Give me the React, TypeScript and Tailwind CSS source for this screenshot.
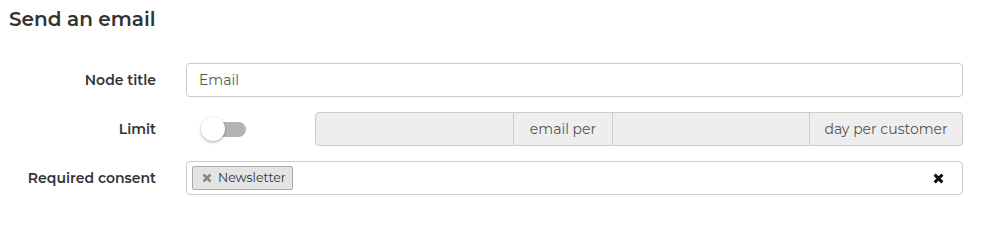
import React from "react";

const font = { fontFamily: '"Montserrat", "Inter", "Open Sans", sans-serif' };

function Cross({ size, color, stroke }: { size: number; color: string; stroke: number }) {
  return (
    <svg width={size} height={size} viewBox="0 0 10 10" className="shrink-0">
      <path d="M1.5 1.5 L8.5 8.5 M8.5 1.5 L1.5 8.5" stroke={color} strokeWidth={stroke} strokeLinecap="butt" />
    </svg>
  );
}

export default function App() {
  return (
    <div className="w-[985px] h-[201px] bg-white text-[#333] overflow-hidden" style={font}>
      <div className="pl-[9px] pt-[6px] h-[40px]">
        <h1 className="text-[20px] font-semibold leading-[26px] text-[#333]">Send an email</h1>
      </div>
      <div className="flex flex-col gap-[15px] pt-[23px] pr-[22px]">
        <div className="flex items-center h-[34px]">
          <div className="w-[156px] text-right text-[14px] font-semibold text-[#333]">Node title</div>
          <div className="ml-[30px] flex-1 h-[34px] border border-[#ccc] rounded-[4px] flex items-center px-[12px] text-[14px] text-[#555]">Email</div>
        </div>
        <div className="flex items-center h-[34px]">
          <div className="w-[156px] text-right text-[14px] font-semibold text-[#333]">Limit</div>
          <div className="ml-[30px] w-[129px] h-[34px] flex items-center pl-[15px]">
            <div className="relative w-[45px] h-[24px] flex items-center">
              <div className="ml-[4px] w-[41px] h-[15px] rounded-full bg-[#b3b3b3]" />
              <div className="absolute left-0 top-0 w-[24px] h-[24px] rounded-full bg-white shadow-[0_1px_3px_rgba(0,0,0,0.35)]" />
            </div>
          </div>
          <div className="flex-1 h-[34px] flex text-[14px] text-[#555]">
            <div className="w-[199px] h-full bg-[#eee] border border-[#ccc] rounded-l-[4px]" />
            <div className="w-[98px] h-full bg-[#eee] border-y border-[#ccc] flex items-center justify-center">email per</div>
            <div className="w-[198px] h-full bg-[#eee] border border-[#ccc]" />
            <div className="flex-1 h-full bg-[#eee] border-y border-r border-[#ccc] rounded-r-[4px] flex items-center justify-center">day per customer</div>
          </div>
        </div>
        <div className="flex items-center h-[34px]">
          <div className="w-[156px] text-right text-[14px] font-semibold text-[#333]">Required consent</div>
          <div className="ml-[30px] flex-1 h-[34px] border border-[#ccc] rounded-[4px] flex items-center pl-[5px] pr-[18px]">
            <div className="h-[24px] bg-[#e4e4e4] border border-[#aaa] rounded-[2px] flex items-center pl-[9px] pr-[6px] text-[12.5px] text-[#333]">
              <Cross size={10} color="#888" stroke={2.6} />
              <span className="ml-[6px]">Newsletter</span>
            </div>
            <div className="flex-1" />
            <Cross size={11} color="#111" stroke={2.8} />
          </div>
        </div>
      </div>
    </div>
  );
}
